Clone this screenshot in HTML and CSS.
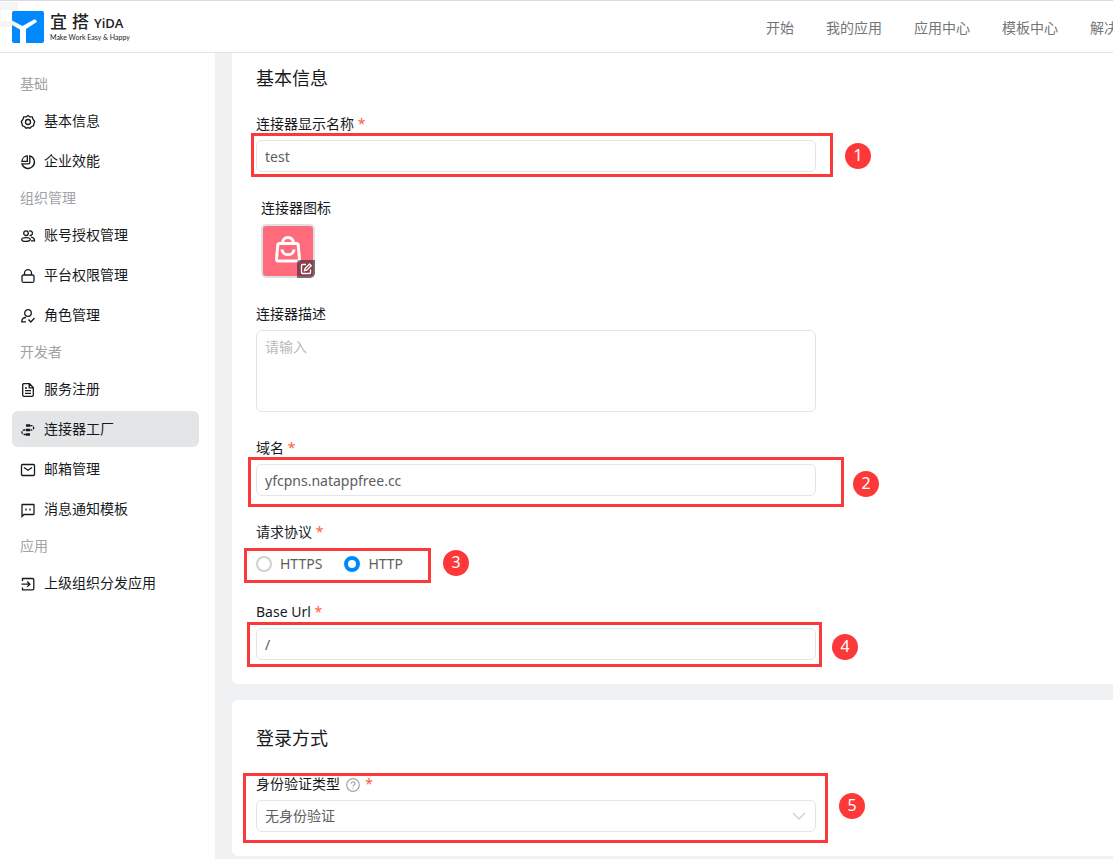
FILE: index.html
```html
<!DOCTYPE html>
<html lang="zh-CN">
<head>
<meta charset="utf-8">
<meta name="viewport" content="width=device-width, initial-scale=1">
<title>宜搭 - 连接器工厂</title>
<link rel="stylesheet" href="styles.css">
</head>
<body>
<header class="topbar">
  <a class="brand" href="#">
    <svg class="brand-mark" viewBox="0 0 32 32" aria-hidden="true">
      <rect width="32" height="32" rx="2" fill="#0089ff"/>
      <path d="M0 9.500 10.500 15 22.500 8.300Q24.500 8.300 24.800 11L14 18V32H8V18.500L0 14Z" fill="#fff"/>
    </svg>
    <span class="brand-text">
      <span class="brand-name"><span>宜</span><span>搭</span><span class="brand-latin">YiDA</span></span>
      <span class="brand-tagline">Make Work Easy &amp; Happy</span>
    </span>
  </a>
  <nav class="topnav">
    <a href="#">开始</a>
    <a href="#">我的应用</a>
    <a href="#">应用中心</a>
    <a href="#">模板中心</a>
    <a href="#">解决方案</a>
  </nav>
</header>
<div class="layout">
  <nav class="sidebar">
    <h2 class="group">基础</h2>
    <a class="item" href="#"><svg class="icon" viewBox="0 0 16 16"><path d="M8 1.500 9.800 2.900 12.300 2.900 13 5.200 14.700 7.500 14 9.500 13.500 11.800 11.300 12.700 10 14.200 8 13.700 6 14.200 4.700 12.700 2.500 11.800 2 9.500 1.300 7.500 3 5.200 3.700 2.900 6.200 2.900Z"/><circle cx="8" cy="8" r="2.500"/></svg>基本信息</a>
    <a class="item" href="#"><svg class="icon" viewBox="0 0 16 16"><path d="M9.800 1.900A6.400 6.400 0 1 1 1.900 9.800H8.500Q9.800 9.800 9.800 8.500Z"/><path d="M7.300 1.900V7.300H1.900A5.800 5.800 0 0 1 7.300 1.900Z"/></svg>企业效能</a>
    <h2 class="group">组织管理</h2>
    <a class="item" href="#"><svg class="icon" viewBox="0 0 16 16"><circle cx="6" cy="5.200" r="2.300"/><path d="M9 3.200A2.300 2.300 0 1 1 9.500 7.400M1.700 11.500C1.700 8.900 10.300 8.900 10.300 11.500S1.700 14 1.700 11.500ZM11 9.200C13.500 9.500 14.500 10.500 14.500 12.800H11"/></svg>账号授权管理</a>
    <a class="item" href="#"><svg class="icon" viewBox="0 0 16 16"><rect x="2" y="7" width="12" height="7.300" rx="1.500"/><path d="M4.500 7V5.200A3.500 3.500 0 0 1 11.500 5.200V7"/></svg>平台权限管理</a>
    <a class="item" href="#"><svg class="icon" viewBox="0 0 16 16"><circle cx="8" cy="5" r="3.300"/><path d="M6 9.500C3.500 9.500 1.800 10.500 1.800 13.800H6M8.500 11.500 10.800 14 14.500 10"/></svg>角色管理</a>
    <h2 class="group">开发者</h2>
    <a class="item" href="#"><svg class="icon" viewBox="0 0 16 16"><path d="M3.500 1.700H9.500L13.300 5.500V13A1.300 1.300 0 0 1 12 14.300H4A1.300 1.300 0 0 1 2.700 13V2.500ZM9.200 2V5.800H13M5 6H7M5 8.700H11M5 11.300H11"/></svg>服务注册</a>
    <a class="item item-active" href="#" aria-current="page"><svg class="icon" viewBox="0 0 16 16"><path class="solid" d="M6 2.300H10V4.800H6ZM6 6.800H10V9.200H6ZM6 11.200H10V13.700H6Z"/><path d="M10 3.600H11.500A2.200 2.200 0 0 1 11.500 8H10.500M5.500 8H4.200A2.200 2.200 0 0 0 4.200 12.500H6" stroke-dasharray="2.500 1"/></svg>连接器工厂</a>
    <a class="item" href="#"><svg class="icon" viewBox="0 0 16 16"><rect x="1.500" y="2.500" width="13" height="11" rx="1"/><path d="M4 5.500 8 8.300 12 5.500"/></svg>邮箱管理</a>
    <a class="item" href="#"><svg class="icon" viewBox="0 0 16 16"><path d="M2 14.500V3Q2 2.500 2.500 2.500H13.500Q14 2.500 14 3V12Q14 12.500 13.500 12.500H4Z"/><path d="M6 6.500V8.500M10 6.500V8.500"/></svg>消息通知模板</a>
    <h2 class="group">应用</h2>
    <a class="item" href="#"><svg class="icon" viewBox="0 0 16 16"><path d="M2.500 5V2.500H12.500Q13.800 2.500 13.800 3.800V12.500Q13.800 13.800 12.500 13.800H2.500V11.500M1.500 8.200H9.500M7.200 5.500 9.900 8.200 7.200 10.900"/></svg>上级组织分发应用</a>
  </nav>
  <main class="content">
    <section class="card card-scrolled">
      <h1 class="card-title">基本信息</h1>
      <div class="fields">
        <div class="field">
          <label class="label" for="name">连接器显示名称 <span class="req">*</span></label>
          <input class="control" id="name" type="text" value="test">
          <span class="frame frame-1"></span><span class="pin pin-1">1</span>
        </div>
        <div class="field field-inset">
          <span class="label">连接器图标</span>
          <button class="picker" type="button" aria-label="修改图标">
            <svg class="picker-bag" viewBox="0 0 28 28"><path d="M5.500 8.500H22.500Q24 8.500 24.200 10L25.500 24Q25.500 26 23.500 26H4.500Q2.500 26 2.500 24L3.800 10Q4 8.500 5.500 8.500ZM8.500 8A5.500 5.500 0 0 1 19.500 8M8 14.500C8.500 21.500 19.500 21.500 20 14.500"/></svg>
            <span class="picker-edit"><svg viewBox="0 0 18 18"><path d="M9 4.500H5.500Q4.500 4.500 4.500 5.500V12.500Q4.500 13.500 5.500 13.500H12.500Q13.500 13.500 13.500 12.500V9.500M7.500 10.700 8 8.500 12.500 4 14.200 5.700 9.700 10.200Z"/></svg></span>
          </button>
        </div>
        <div class="field">
          <label class="label" for="desc">连接器描述</label>
          <textarea class="control control-area" id="desc" placeholder="请输入"></textarea>
        </div>
        <div class="field">
          <label class="label" for="domain">域名 <span class="req">*</span></label>
          <input class="control" id="domain" type="text" value="yfcpns.natappfree.cc">
          <span class="frame frame-2"></span><span class="pin pin-2">2</span>
        </div>
        <div class="field field-radio" role="radiogroup" aria-labelledby="protocol">
          <span class="label" id="protocol">请求协议 <span class="req">*</span></span>
          <div class="radios">
            <label class="radio"><input type="radio" name="protocol">HTTPS</label>
            <label class="radio"><input type="radio" name="protocol" checked>HTTP</label>
          </div>
          <span class="frame frame-3"></span><span class="pin pin-3">3</span>
        </div>
        <div class="field">
          <label class="label" for="base">Base Url <span class="req">*</span></label>
          <input class="control" id="base" type="text" value="/">
          <span class="frame frame-4"></span><span class="pin pin-4">4</span>
        </div>
      </div>
    </section>
    <section class="card">
      <h1 class="card-title">登录方式</h1>
      <div class="field">
        <label class="label" for="auth">身份验证类型
          <svg class="help" viewBox="0 0 14 14"><circle cx="7" cy="7" r="6.300"/><path d="M5.200 5.700C5.200 3.200 8.900 3.200 8.900 5.600 8.900 7 7 6.900 7 8.500M7 9.700V10.800"/></svg>
          <span class="req">*</span></label>
        <div class="select">
          <select class="control" id="auth"><option>无身份验证</option></select>
          <svg class="chevron" viewBox="0 0 14 8"><path d="M1 1 7 7 13 1"/></svg>
        </div>
        <span class="frame frame-5"></span><span class="pin pin-5">5</span>
      </div>
    </section>
  </main>
</div>
</body>
</html>
```
FILE: styles.css
```css
* { box-sizing: border-box; }

body {
  margin: 0;
  min-height: 100vh;
  display: flex;
  flex-direction: column;
  overflow: hidden;
  background: #fff;
  color: #171a1d;
  font: 14px/24px "Noto Sans", "Noto Sans CJK SC", sans-serif;
}

a { color: inherit; text-decoration: none; }

/* Top bar */
.topbar {
  position: relative;
  display: flex;
  align-items: center;
  height: 53px;
  padding-left: 12px;
  border-top: 1px solid #dcdcdc;
  border-bottom: 1px solid #e3e3e3;
}
.topbar::after {
  content: "";
  position: absolute;
  left: 0;
  top: 1px;
  width: 18px;
  height: 25px;
  background:
    linear-gradient(#fff, #fff) 1px 8px / 11px 11px no-repeat,
    rgba(120, 120, 120, .07);
}
.brand { display: flex; align-items: center; gap: 6px; }
.brand-mark { width: 32px; height: 32px; }
.brand-text { display: flex; flex-direction: column; color: #222; white-space: nowrap; }
.brand-name { display: flex; align-items: baseline; gap: 5px; font-size: 17px; line-height: 20px; font-weight: 500; }
.brand-latin { font: 600 13px/20px "Open Sans", sans-serif; }
.brand-tagline { font: 400 7px/8px Lato, sans-serif; }
.topnav {
  display: flex;
  gap: 32px;
  flex: 0 0 347px;
  margin-left: auto;
  padding-top: 2px;
  overflow: hidden;
  white-space: nowrap;
  color: #747677;
}
.topnav a { flex: none; }

/* Layout */
.layout { display: flex; flex: 1; }
.sidebar { flex: 0 0 215px; padding: 14px 16px 0 12px; }
.group { margin: 0; padding-left: 8px; font-size: 14px; line-height: 34px; font-weight: 400; color: #a2a3a5; }
.item {
  display: flex;
  align-items: center;
  gap: 8px;
  height: 36px;
  margin: 2px 0;
  padding-left: 8px;
  border-radius: 6px;
}
.item + .item { margin-top: 4px; }
.item-active { background: #e4e5e7; }
.icon { width: 16px; height: 16px; margin-top: 2px; fill: none; stroke: #171a1d; stroke-width: 1.3; }
.icon .solid { fill: #171a1d; stroke: none; }
.content { flex: 1; min-width: 0; padding-left: 17px; background: #f0f1f3; }

/* Cards and fields */
.card { padding: 24px; margin-bottom: 16px; background: #fff; border-radius: 6px 0 0 6px; }
.card:last-child { margin-bottom: 0; }
.card-scrolled { padding-top: 11px; border-top-left-radius: 0; }
.card-title { margin: 0 0 20px; font-size: 18px; line-height: 28px; font-weight: 400; }
.fields { display: flex; flex-direction: column; gap: 24px; }
.field { position: relative; display: flex; flex-direction: column; gap: 4px; width: 100%; max-width: 560px; }
.field-inset { padding-left: 5px; }
.field-radio { margin-bottom: -4px; }
.label { height: 24px; }
.req { color: #ff5b43; }
.control {
  width: 100%;
  height: 32px;
  padding: 0 8px;
  border: 1px solid #e4e5e6;
  border-radius: 6px;
  background: #fff;
  color: #5c5e60;
  font: inherit;
  outline: none;
}
.control-area { display: block; height: 82px; padding-top: 4px; resize: none; }
.control::placeholder { color: #b9babb; }
.radios { display: flex; gap: 22px; height: 32px; }
.radio { display: flex; align-items: center; gap: 8px; color: #5c5e60; }
.radio input {
  appearance: none;
  width: 16px;
  height: 16px;
  margin: 0;
  border: 2px solid #cfd1d4;
  border-radius: 50%;
}
.radio input:checked { border: 4px solid #0089ff; }
.select { position: relative; }
.select .control { display: block; appearance: none; }
.chevron { position: absolute; right: 10px; top: 12px; width: 14px; height: 8px; fill: none; stroke: #cfd2d6; stroke-width: 1.5; }
.help { width: 14px; height: 14px; margin: 0 2px; vertical-align: -3px; fill: none; stroke: #a4a7aa; stroke-width: 1.2; }

/* Icon picker */
.picker {
  position: relative;
  display: grid;
  place-items: center;
  width: 54px;
  height: 54px;
  padding: 0 0 4px;
  border: 2px solid #dfe0e3;
  border-radius: 5px;
  background: #ff6b7c;
}
.picker-bag { width: 28px; height: 28px; fill: none; stroke: #fff; stroke-width: 3; }
.picker-edit {
  position: absolute;
  right: -2px;
  bottom: -2px;
  width: 18px;
  height: 18px;
  border-radius: 3px 0 5px;
  background: rgba(70, 40, 50, .65);
}
.picker-edit svg { display: block; fill: none; stroke: #fff; stroke-width: 1.3; }

/* Step annotations laid over the form */
.frame { position: absolute; border: 3px solid #fd3838; pointer-events: none; }
.frame-1 { left: -5px; top: 21px; width: 582px; height: 44px; }
.frame-2 { left: -8px; top: 21px; width: 596px; height: 50px; }
.frame-3 { left: -12px; top: 28px; width: 187px; height: 35px; }
.frame-4 { left: -9px; top: 22px; width: 575px; height: 45px; }
.frame-5 { left: -13px; top: 1px; width: 585px; height: 70px; }
.pin {
  position: absolute;
  width: 26px;
  height: 26px;
  border-radius: 50%;
  background: #fd3838;
  color: #fff;
  font-size: 16px;
  line-height: 24px;
  text-align: center;
}
.pin-1 { left: 589px; top: 31px; }
.pin-2 { left: 597px; top: 35px; }
.pin-3 { left: 187px; top: 30px; }
.pin-4 { left: 576px; top: 34px; }
.pin-5 { left: 583px; top: 21px; }
```
